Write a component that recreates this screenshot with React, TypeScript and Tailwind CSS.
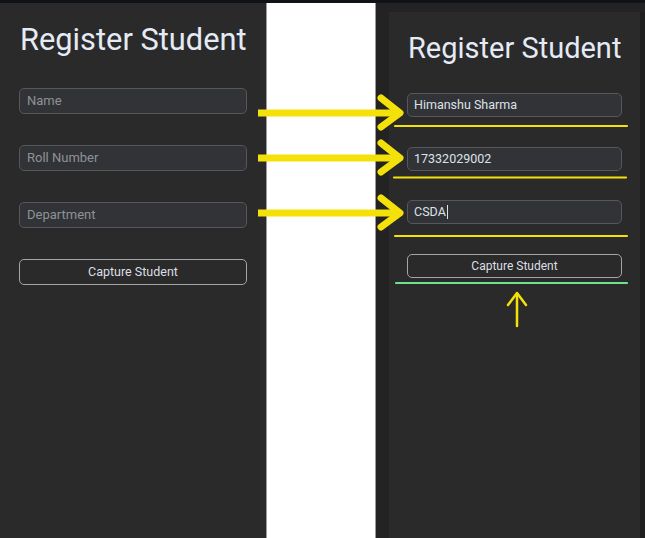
import React from "react";

const font = { fontFamily: "Roboto, 'Noto Sans', sans-serif" };

const Field = ({
  label,
  value,
  big,
  caret,
}: {
  label: string;
  value?: string;
  big?: boolean;
  caret?: boolean;
}) => (
  <div
    className={`flex items-center rounded-[5px] border-[1.5px] border-[#55575b] bg-[#323336] ${
      big ? "h-[26px] pl-[7px] text-[13px]" : "h-[24px] pl-[6px] text-[12.5px]"
    }`}
  >
    {value ? (
      <span className="flex items-center text-[#dde2ea]">
        {value}
        {caret && <span className="ml-[1px] inline-block h-[14px] w-px bg-[#dde2ea]" />}
      </span>
    ) : (
      <span className="text-[#8e9298]">{label}</span>
    )}
  </div>
);

const CaptureButton = ({ big }: { big?: boolean }) => (
  <div
    className={`flex items-center justify-center rounded-[5px] border-[1.5px] border-[#a3a5a8] bg-[#2a2a2a] text-[#dcdfe4] ${
      big ? "h-[26px] text-[12.5px]" : "h-[24px] text-[12px]"
    }`}
  >
    Capture Student
  </div>
);

const Annotations = () => (
  <svg className="pointer-events-none absolute inset-0" width="645" height="538" viewBox="0 0 645 538">
    <g stroke="#f5e10a" strokeLinecap="round" strokeLinejoin="round" fill="none">
      {[113, 158, 213].map((y) => (
        <g key={y}>
          <line x1="258" y1={y} x2="398" y2={y} strokeWidth="7" strokeLinecap="butt" />
          <polyline points={`381,${y - 15} 400,${y} 381,${y + 14}`} strokeWidth="7" />
        </g>
      ))}
      <line x1="395" y1="126" x2="627" y2="126" strokeWidth="2.2" />
      <line x1="394" y1="177.5" x2="626" y2="177.5" strokeWidth="2.2" />
      <line x1="395" y1="236" x2="627" y2="236" strokeWidth="2.2" />
      <line x1="517" y1="294" x2="517" y2="326" strokeWidth="2.5" />
      <polyline points="508,305 517,293 526,305" strokeWidth="2.5" />
    </g>
    <line x1="396" y1="283" x2="627" y2="283" stroke="#6fe38b" strokeWidth="2.2" strokeLinecap="round" />
  </svg>
);

export default function App() {
  return (
    <div className="relative h-[538px] w-[645px] overflow-hidden bg-[#2a2a2a]" style={font}>
      <div className="h-[3px] bg-[#0f1317]" />
      <div className="flex h-[535px]">
        {/* left screenshot */}
        <div className="flex w-[266px] flex-col bg-[#2a2a2a] pl-[19px] pr-[19px]">
          <h1 className="mt-[19px] pl-[1px] text-[30.8px] leading-[35px] whitespace-nowrap text-[#e4ebf6]">
            Register Student
          </h1>
          <div className="mt-[31px] flex flex-col gap-[31px]">
            <Field label="Name" big />
            <Field label="Roll Number" big />
            <Field label="Department" big />
            <CaptureButton big />
          </div>
        </div>
        {/* white gap */}
        <div className="w-[110px] border-x border-[#9b9b9b] bg-white" />
        {/* right screenshot */}
        <div className="flex flex-1 flex-col bg-[#232323]">
          <div className="h-[9px]" />
          <div className="flex flex-1">
            <div className="w-[13px]" />
            <div className="flex w-[251px] flex-col bg-[#2a2a2a] pl-[18px] pr-[18px]">
              <h1 className="mt-[18px] pl-[1px] text-[29px] leading-[36px] whitespace-nowrap text-[#e4ebf6]">
                Register Student
              </h1>
              <div className="mt-[27px] flex flex-col">
                <Field label="Name" value="Himanshu Sharma" />
                <div className="mt-[30px]">
                  <Field label="Roll Number" value="17332029002" />
                </div>
                <div className="mt-[29px]">
                  <Field label="Department" value="CSDA" caret />
                </div>
                <div className="mt-[30px]">
                  <CaptureButton />
                </div>
              </div>
            </div>
            <div className="flex-1 bg-[#1f1f1f]" />
          </div>
        </div>
      </div>
      <Annotations />
    </div>
  );
}
